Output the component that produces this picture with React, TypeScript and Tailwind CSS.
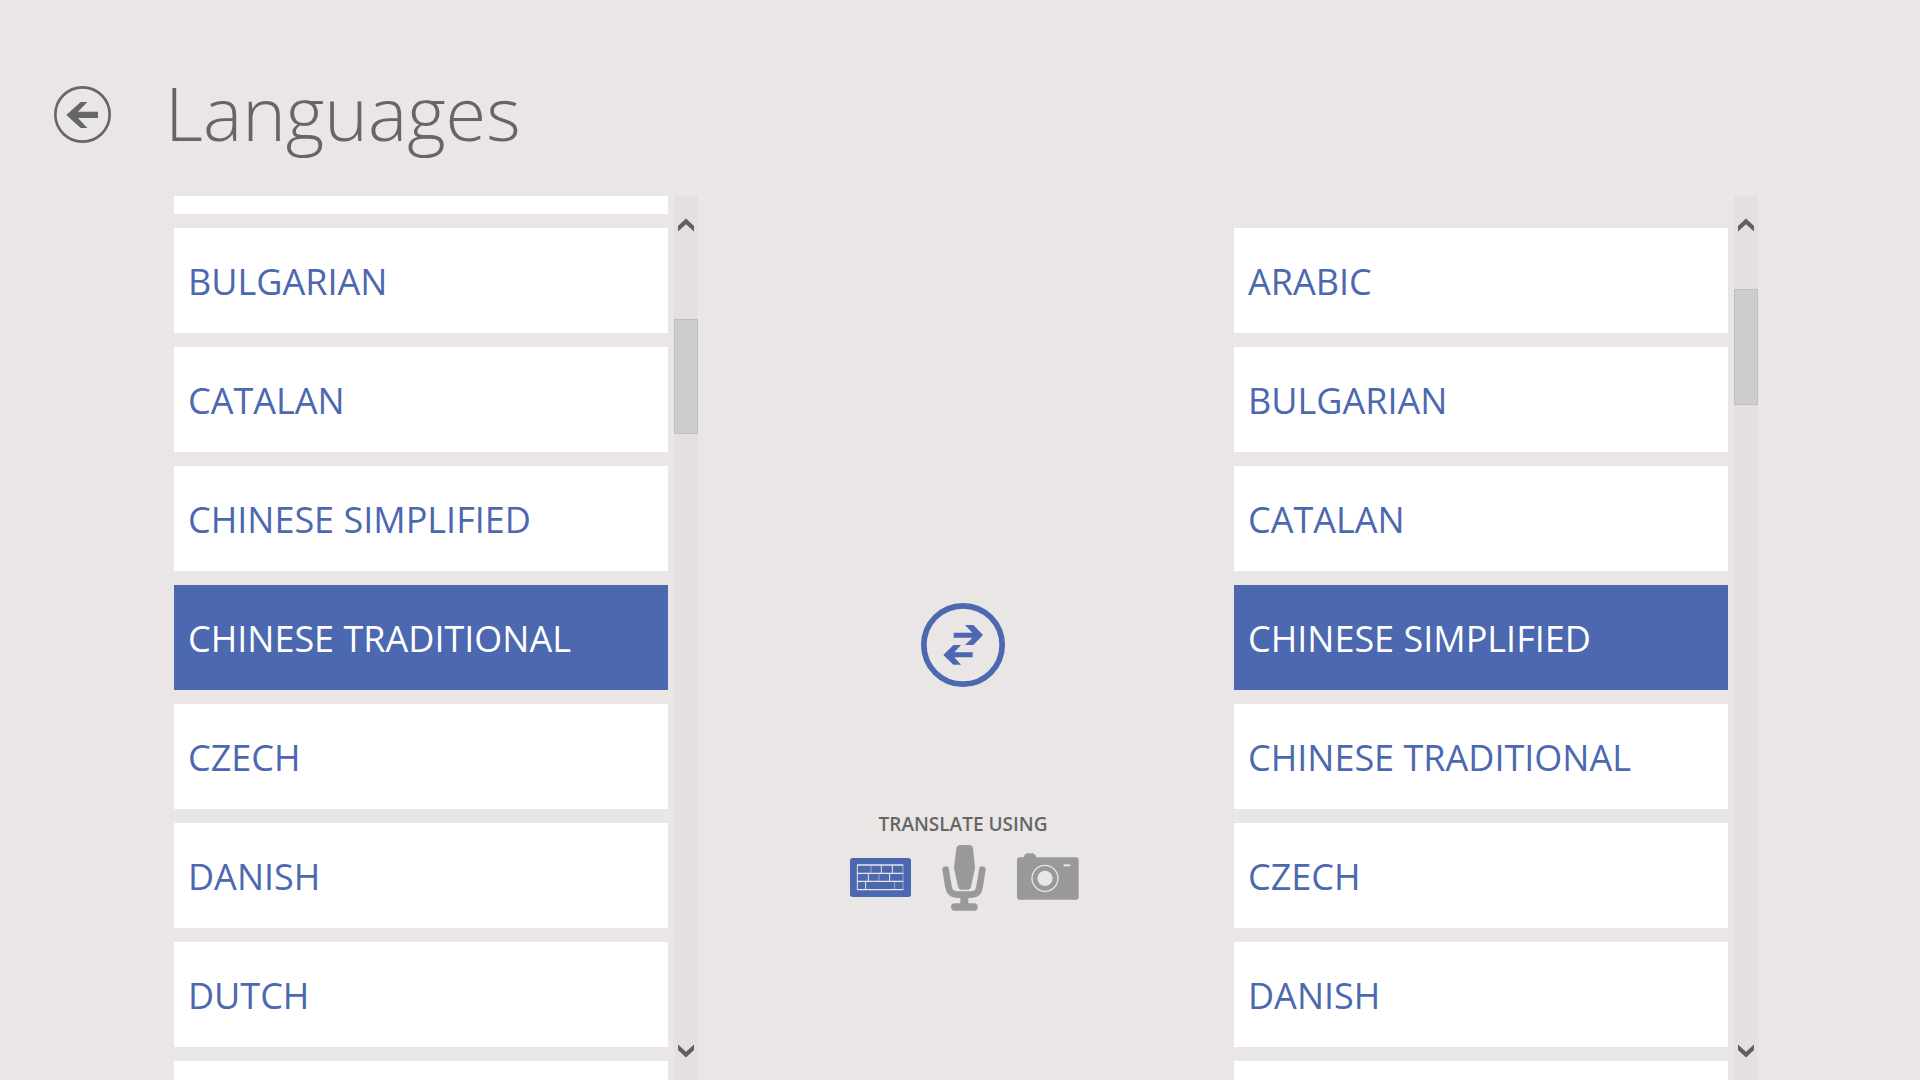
import { useLayoutEffect, useRef, useState } from "react";

const LANGUAGES = [
  "ARABIC",
  "BULGARIAN",
  "CATALAN",
  "CHINESE SIMPLIFIED",
  "CHINESE TRADITIONAL",
  "CZECH",
  "DANISH",
  "DUTCH",
  "ENGLISH",
];

const ROW_HEIGHT = 119;

function Chevron({ down = false }: { down?: boolean }) {
  return (
    <svg viewBox="0 0 16 14" className={down ? "w-4 h-[14px] rotate-180" : "w-4 h-[14px]"} fill="#5f5f5f" aria-hidden="true">
      <path d="M8 0.5 L16 8 V13.5 L8 6.3 L0 13.5 V8 Z" />
    </svg>
  );
}

function LanguageList({ label, initial, skip, thumb }: { label: string; initial: string; skip: number; thumb: string }) {
  const [selected, setSelected] = useState(initial);
  const listRef = useRef<HTMLUListElement>(null);

  useLayoutEffect(() => {
    if (listRef.current) listRef.current.scrollTop = skip * ROW_HEIGHT;
  }, [skip]);

  const scroll = (rows: number) => listRef.current?.scrollBy({ top: rows * ROW_HEIGHT });

  return (
    <section aria-label={label} className="flex-1 min-w-0 min-h-0 flex gap-[6px]">
      <ul ref={listRef} className="flex-1 min-w-0 flex flex-col gap-[14px] pt-8 overflow-y-auto [scrollbar-width:none]">
        {LANGUAGES.map((name) => (
          <li key={name} className="shrink-0">
            <button
              type="button"
              aria-pressed={name === selected}
              onClick={() => setSelected(name)}
              className={`block w-full h-[105px] px-[14px] pt-[3px] text-left text-[36px] leading-[48px] whitespace-nowrap ${
                name === selected ? "bg-[#4b68b0] text-white" : "bg-white text-[#4b68b0]"
              }`}
            >
              {name}
            </button>
          </li>
        ))}
      </ul>
      <div className="w-6 flex flex-col bg-[#e3e0df]">
        <button type="button" aria-label="Scroll up" onClick={() => scroll(-1)} className="h-[58px] flex items-center justify-center">
          <Chevron />
        </button>
        <div className="flex-1">
          <div className={`border border-[#bfbfbf] bg-[#cdcdcd] ${thumb}`} />
        </div>
        <button type="button" aria-label="Scroll down" onClick={() => scroll(1)} className="h-[58px] flex items-center justify-center">
          <Chevron down />
        </button>
      </div>
    </section>
  );
}

function BackIcon() {
  return (
    <svg viewBox="0 0 171 171" className="size-[57px]" aria-hidden="true">
      <circle cx="85.5" cy="85.5" r="81.5" fill="none" stroke="#666" strokeWidth="8" />
      <path d="M37 87 L80 48 H100 L72 77 H132 V96 H72 L100 126 H80 Z" fill="#666" />
    </svg>
  );
}

function SwapIcon() {
  return (
    <svg viewBox="0 0 252 252" className="size-[84px]" fill="#4b68b0" aria-hidden="true">
      <circle cx="126" cy="126" r="117.5" fill="none" stroke="#4b68b0" strokeWidth="17" />
      <path d="M98 89 H154 L132 66 H157 L186 96 L157 126 H132 L154 104 H98 Z" />
      <path d="M155 148 H100 L120 126 H97 L67 156 L97 185 H120 L100 163 H155 Z" />
    </svg>
  );
}

function KeyboardIcon() {
  return (
    <svg viewBox="0 0 183 123" className="w-[61px] h-[41px]" aria-hidden="true">
      <rect width="183" height="117" rx="8" fill="#4b68b0" />
      <g fill="none" stroke="#e9e6e5" strokeWidth="3">
        <path d="M21 21 H160 M21 46 H160 M21 70 H160 M21 95 H160" strokeWidth="4" />
        <path d="M22 21 V95 M94 21 V46 M127 21 V46 M55 46 V70 M119 46 V70 M47 70 V95" />
        <path d="M63 21 V46 M87 46 V70 M134 70 V95 M159 21 V95" opacity="0.5" />
      </g>
    </svg>
  );
}

function MicIcon() {
  return (
    <svg viewBox="0 0 132 198" className="w-11 h-[66px]" fill="#999" aria-hidden="true">
      <path d="M43 10 Q45 0 56 0 H80 Q91 0 93 10 L99 69 L87 125 Q85 134 77 134 H58 Q51 134 48 125 L36 69 Z" />
      <path d="M11 74 L19 124 Q23 149 45 149 H88 Q110 149 113 124 L121 74" fill="none" stroke="#999" strokeWidth="20" strokeLinecap="round" />
      <rect x="55" y="155" width="24" height="24" />
      <rect x="27" y="175" width="80" height="22" rx="11" />
    </svg>
  );
}

function CameraIcon() {
  return (
    <svg viewBox="0 0 186 153" className="w-[62px] h-[51px]" fill="#999" aria-hidden="true">
      <path d="M8 13 H20 Q24 1 32 1 H46 Q54 1 58 13 H177 Q185 13 185 21 V132 Q185 140 177 140 H8 Q0 140 0 132 V21 Q0 13 8 13 Z" />
      <circle cx="84" cy="76" r="39" fill="none" stroke="#e9e6e5" strokeWidth="4" />
      <circle cx="84" cy="76" r="23" fill="#e9e6e5" />
      <rect x="140" y="34" width="20" height="6" fill="#e9e6e5" />
    </svg>
  );
}

export default function App() {
  return (
    <div className="h-screen flex flex-col overflow-hidden bg-[#e9e6e5] text-[#666] font-['Open_Sans','Noto_Sans',sans-serif]">
      <header className="h-[196px] shrink-0 flex items-start gap-[54px] pl-[54px] pt-[62px]">
        <button type="button" aria-label="Back" className="mt-6">
          <BackIcon />
        </button>
        <h1 className="text-[74px] leading-[102px] font-[350]">Languages</h1>
      </header>

      <main className="flex-1 min-h-0 flex pl-[174px] pr-[162px]">
        <LanguageList label="Translate from" initial="CHINESE TRADITIONAL" skip={1} thumb="mt-[65px] h-[115px]" />

        <div className="w-[536px] shrink-0 flex flex-col items-center pt-[407px] pr-[6px]">
          <button type="button" aria-label="Swap languages">
            <SwapIcon />
          </button>
          <h2 className="mt-[124px] text-[19px] leading-[26px] font-semibold">TRANSLATE USING</h2>
          <div className="mt-2 pl-[2px] flex items-center gap-[31px]">
            <button type="button" aria-label="Keyboard" aria-pressed="true">
              <KeyboardIcon />
            </button>
            <button type="button" aria-label="Microphone">
              <MicIcon />
            </button>
            <button type="button" aria-label="Camera">
              <CameraIcon />
            </button>
          </div>
        </div>

        <LanguageList label="Translate to" initial="CHINESE SIMPLIFIED" skip={0} thumb="mt-[35px] h-[116px]" />
      </main>
    </div>
  );
}
